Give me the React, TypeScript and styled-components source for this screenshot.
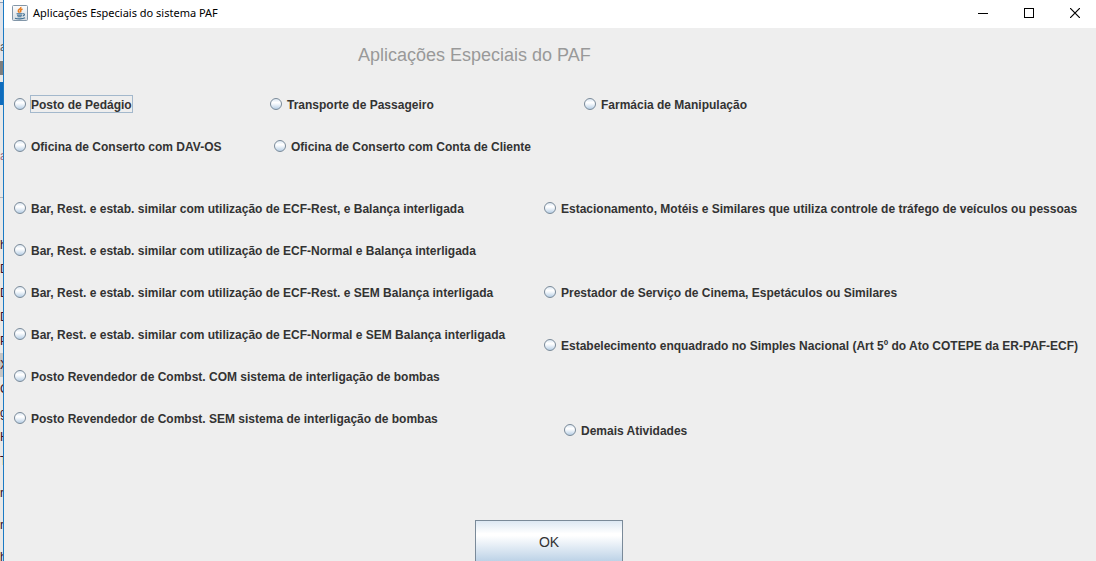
import React from "react";
import styled, { createGlobalStyle } from "styled-components";

const GlobalStyle = createGlobalStyle`
  *, *::before, *::after { box-sizing: border-box; }
  body { margin: 0; background: #ededed; font-family: "Liberation Sans", Arial, sans-serif; }
`;

const Desktop = styled.div`
  display: flex;
  height: 100vh;
  overflow: hidden;
`;

const BackStrip = styled.aside`
  flex: 0 0 3px;
  overflow: hidden;
  background: linear-gradient(#f0f0f0 0 2px, #8d9db5 2px 3px, #dfe3ea 3px 60px, #e8e8e8 60px);
`;

const StripRow = styled.div<{ $height: number; $color?: string; $bg?: string }>`
  height: ${(p) => p.$height}px;
  line-height: ${(p) => p.$height}px;
  color: ${(p) => p.$color ?? "#3a0d22"};
  background: ${(p) => p.$bg ?? "transparent"};
  font-size: 12px;
  white-space: nowrap;
`;

const Window = styled.main`
  flex: 1;
  min-width: 0;
  display: flex;
  flex-direction: column;
  border-left: 1px solid #1a7ac4;
  background: #eeeeee;
`;

const TitleBar = styled.header`
  display: flex;
  align-items: center;
  flex: 0 0 28px;
  gap: 4px;
  padding-left: 8px;
  padding-bottom: 3px;
  background: #fff;
`;

const WindowTitle = styled.span`
  flex: 1;
  padding-left: 1px;
  font: 11px/16px "Noto Sans", "Open Sans", sans-serif;
  color: #000;
`;

const WindowButton = styled.button`
  display: flex;
  align-items: center;
  justify-content: center;
  width: 42px;
  height: 25px;
  padding: 0;
  border: 0;
  background: none;
`;

const Heading = styled.h1`
  margin: 16px 0 0 354px;
  font-size: 18px;
  line-height: 22px;
  font-weight: 400;
  color: #999;
`;

const Options = styled.form`
  flex: 1;
  display: flex;
  flex-direction: column;
  padding: 28px 0 0 10px;
`;

const Row = styled.div<{ $columns: string; $after: number }>`
  display: grid;
  grid-template-columns: ${(p) => p.$columns};
  margin-bottom: ${(p) => p.$after}px;
`;

const Column = styled.div`
  display: flex;
  flex-direction: column;
  gap: 22px;
`;

const Option = styled.label<{ $before?: number; $indent?: number }>`
  display: flex;
  align-items: center;
  gap: 4px;
  height: 20px;
  margin-top: ${(p) => p.$before ?? 0}px;
  margin-left: ${(p) => p.$indent ?? 0}px;
  font-size: 12px;
  line-height: 16px;
  font-weight: 700;
  color: #333;
  white-space: nowrap;
`;

const Radio = styled.input`
  appearance: none;
  flex: none;
  width: 12px;
  height: 12px;
  margin: 0;
  border: 1px solid #7a8a99;
  border-radius: 50%;
  background: linear-gradient(#dde8f3, #fff 35%, #f4f8fc 50%, #b8cfe5);
  &:checked { background: radial-gradient(#333 0 3px, #dde8f3 4px); }
`;

const OptionText = styled.span<{ $focused?: boolean }>`
  padding: 2px 1px 0;
  margin-right: auto;
  outline: ${(p) => (p.$focused ? "1px solid #a3b8cc" : "none")};
  outline-offset: -1px;
`;

const OkButton = styled.button`
  align-self: center;
  flex: none;
  width: 148px;
  height: 44px;
  margin-top: 80px;
  margin-right: 12px;
  border: 1px solid #7a8a99;
  background: linear-gradient(#dde8f3, #fff 30%, #fff 35%, #b8cfe5);
  font: 14px/18px "Liberation Sans", Arial, sans-serif;
  color: #333;
`;

interface OptionProps {
  text: string;
  focused?: boolean;
  before?: number;
  indent?: number;
}

function RadioOption({ text, focused, before, indent }: OptionProps) {
  return (
    <Option $before={before} $indent={indent}>
      <Radio type="radio" name="aplicacao" value={text} />
      <OptionText $focused={focused}>{text}</OptionText>
    </Option>
  );
}

function JavaIcon() {
  return (
    <svg width="16" height="16" viewBox="0 0 16 16" aria-hidden="true">
      <defs>
        <linearGradient id="tile" x1="0" y1="0" x2="0" y2="1">
          <stop offset="0" stopColor="#fdfdfd" />
          <stop offset="1" stopColor="#d5dce2" />
        </linearGradient>
      </defs>
      <rect x="0.5" y="0.5" width="15" height="15" rx="1" fill="url(#tile)" stroke="#8296a8" />
      <path d="M8.800 2C9.300 4 6 4.300 6.300 6C6.500 6.800 7.200 7 7.500 7.800M10.500 4C8.500 4.800 8 5.600 9 7.400" fill="none" stroke="#e87a1c" strokeWidth="1.500" />
      <path d="M4.500 8.700H10.500M5 10.300H10M5.500 11.800H9.500M10.800 8.800C13.200 8.300 12.800 10.800 10.700 11M3 13.200C5.500 14.200 10.500 14.200 13 12.800" fill="none" stroke="#3f6f92" strokeWidth="1.100" />
    </svg>
  );
}

const strip = [
  { height: 34, text: "" },
  { height: 27, text: "a", color: "#555" },
  { height: 14, text: "", bg: "#7d7d7d" },
  { height: 7, text: "" },
  { height: 23, text: "", bg: "#0f6cbd" },
  { height: 39, text: "" },
  { height: 24, text: "a", color: "#a06a80" },
  { height: 29, text: "" },
  { height: 1, text: "", bg: "#b5b5b5" },
  { height: 35, text: "" },
  { height: 24, text: "h" },
  { height: 24, text: "D" },
  { height: 24, text: "D" },
  { height: 24, text: "D" },
  { height: 24, text: "P" },
  { height: 24, text: "X", bg: "#c4c4c4" },
  { height: 24, text: "C" },
  { height: 24, text: "g" },
  { height: 24, text: "H" },
  { height: 24, text: "T" },
  { height: 8, text: "" },
  { height: 24, text: "r" },
  { height: 8, text: "" },
  { height: 24, text: "r" },
  { height: 8, text: "" },
  { height: 24, text: "h" },
];

export default function App() {
  return (
    <Desktop>
      <GlobalStyle />
      <BackStrip aria-hidden="true">
        {strip.map((s, i) => (
          <StripRow key={i} $height={s.height} $color={s.color} $bg={s.bg}>{s.text}</StripRow>
        ))}
      </BackStrip>
      <Window>
        <TitleBar>
          <JavaIcon />
          <WindowTitle>Aplicações Especiais do sistema PAF</WindowTitle>
          <WindowButton type="button" aria-label="Minimizar">
            <svg width="10" height="10" shapeRendering="crispEdges"><path d="M0 5.500H10" stroke="#000" /></svg>
          </WindowButton>
          <WindowButton type="button" aria-label="Maximizar">
            <svg width="10" height="10" shapeRendering="crispEdges"><rect x="0.5" y="0.5" width="9" height="9" fill="none" stroke="#000" /></svg>
          </WindowButton>
          <WindowButton type="button" aria-label="Fechar">
            <svg width="10" height="10"><path d="M0 0L10 10M10 0L0 10" stroke="#000" strokeWidth="1.200" /></svg>
          </WindowButton>
        </TitleBar>
        <Heading>Aplicações Especiais do PAF</Heading>
        <Options>
          <Row $columns="256fr 314fr 512fr" $after={22}>
            <RadioOption text="Posto de Pedágio" focused />
            <RadioOption text="Transporte de Passageiro" />
            <RadioOption text="Farmácia de Manipulação" />
          </Row>
          <Row $columns="260fr 822fr" $after={42}>
            <RadioOption text="Oficina de Conserto com DAV-OS" />
            <RadioOption text="Oficina de Conserto com Conta de Cliente" />
          </Row>
          <Row $columns="530fr 552fr" $after={0}>
            <Column>
              <RadioOption text="Bar, Rest. e estab. similar com utilização de ECF-Rest, e Balança interligada" />
              <RadioOption text="Bar, Rest. e estab. similar com utilização de ECF-Normal e Balança interligada" />
              <RadioOption text="Bar, Rest. e estab. similar com utilização de ECF-Rest. e SEM Balança interligada" />
              <RadioOption text="Bar, Rest. e estab. similar com utilização de ECF-Normal e SEM Balança interligada" />
              <RadioOption text="Posto Revendedor de Combst. COM sistema de interligação de bombas" />
              <RadioOption text="Posto Revendedor de Combst. SEM sistema de interligação de bombas" />
            </Column>
            <Column>
              <RadioOption text="Estacionamento, Motéis e Similares que utiliza controle de tráfego de veículos ou pessoas" />
              <RadioOption text="Prestador de Serviço de Cinema, Espetáculos ou Similares" before={42} />
              <RadioOption text="Estabelecimento enquadrado no Simples Nacional (Art 5º do Ato COTEPE da ER-PAF-ECF)" before={11} />
              <RadioOption text="Demais Atividades" before={43} indent={20} />
            </Column>
          </Row>
          <OkButton type="button">OK</OkButton>
        </Options>
      </Window>
    </Desktop>
  );
}
